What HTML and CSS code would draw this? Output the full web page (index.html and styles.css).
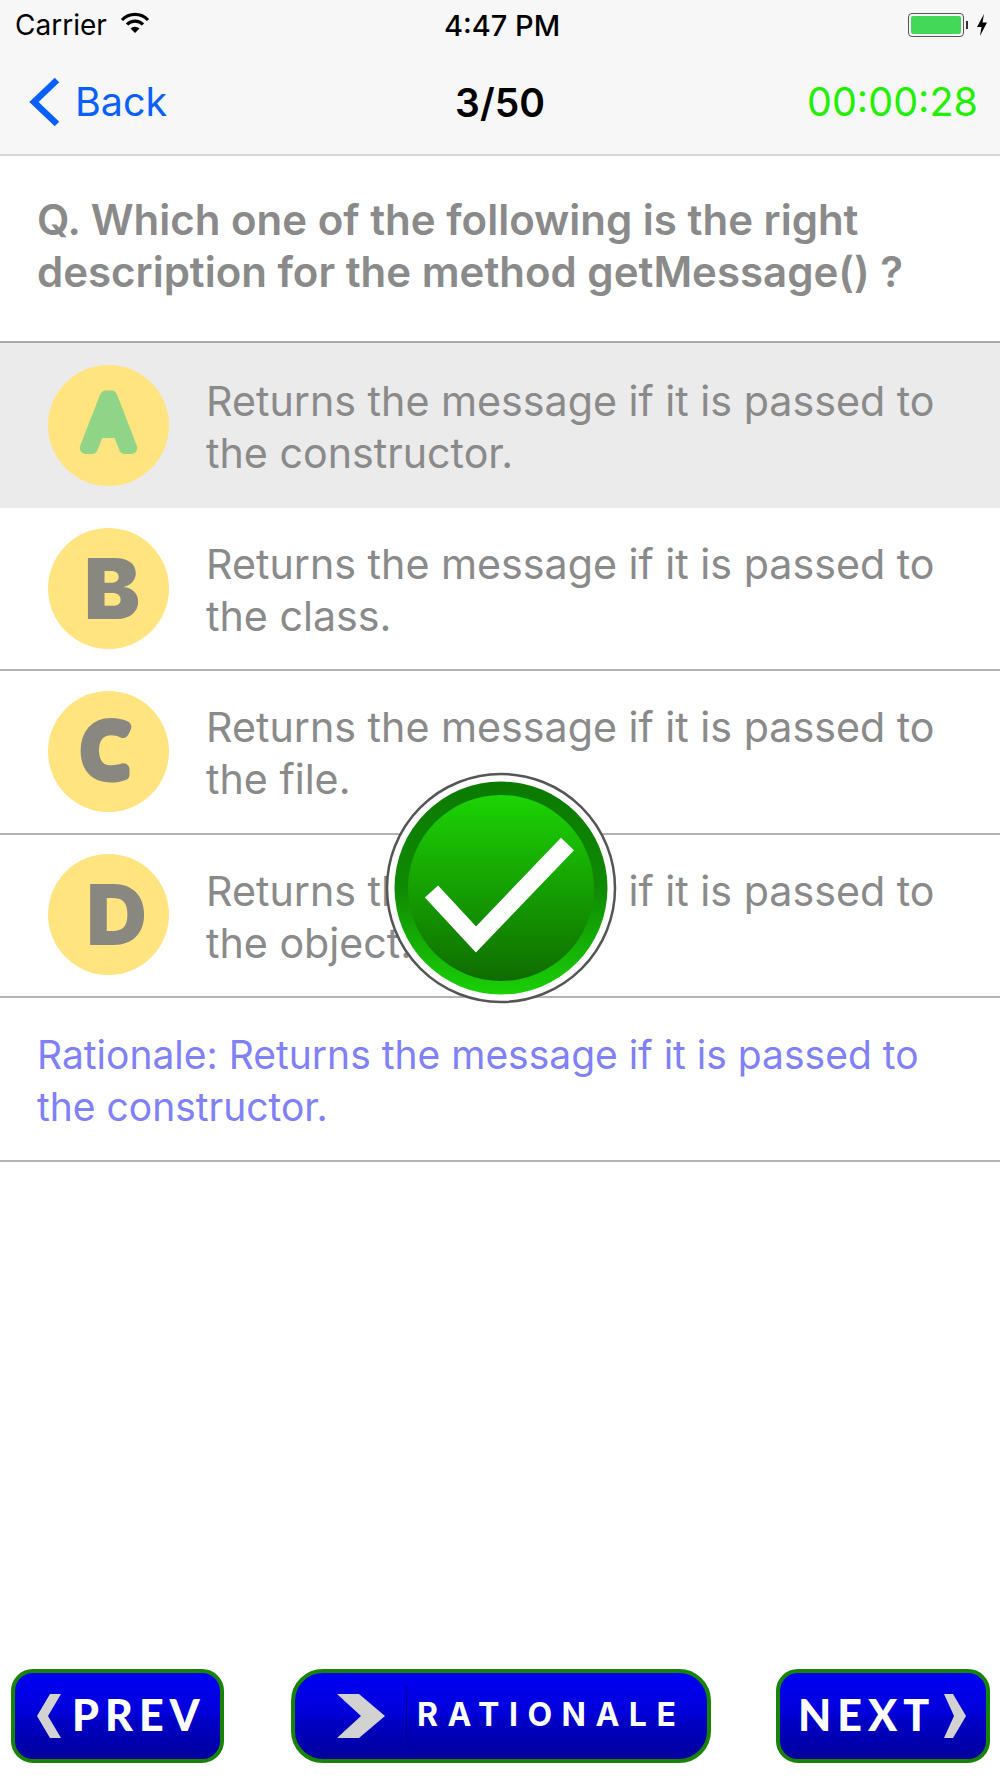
FILE: index.html
```html
<!DOCTYPE html>
<html lang="en">
<head>
    <meta charset="UTF-8">
    <meta name="viewport" content="width=device-width, initial-scale=1.0">
    <title>Quiz</title>
    <link rel="stylesheet" href="styles.css">
</head>
<body>
    <div class="screen">
        <header class="top">
            <div class="status">
                <div class="status-left">
                    <span>Carrier</span>
                    <svg class="wifi" width="30" height="22" viewBox="0 0 30 22">
                        <path d="M2 8 A18 18 0 0 1 28 8" fill="none" stroke="#000" stroke-width="3.2"/>
                        <path d="M7 12.5 A11 11 0 0 1 23 12.5" fill="none" stroke="#000" stroke-width="3.2"/>
                        <path d="M15 21 L10.5 16.5 A6.5 6.5 0 0 1 19.5 16.5 Z" fill="#000"/>
                    </svg>
                </div>
                <div class="status-time">4:47 PM</div>
                <div class="status-right">
                    <div class="battery"><div class="battery-fill"></div></div>
                    <div class="battery-tip"></div>
                    <svg width="14" height="24" viewBox="0 0 14 24"><path d="M9 1 L2 14 H6.5 L5 23 L12 9.5 H7.5 Z" fill="#000"/></svg>
                </div>
            </div>
            <nav class="nav">
                <div class="back">
                    <svg width="32" height="50" viewBox="0 0 32 50"><path d="M29 3 L6 25 L29 47" fill="none" stroke="#0a60ff" stroke-width="6.5"/></svg>
                    <span>Back</span>
                </div>
                <div class="count">3/50</div>
                <div class="timer">00:00:28</div>
            </nav>
        </header>

        <section class="question">Q. Which one of the following is the right description for the method getMessage() ?</section>

        <div class="answers">
            <div class="answer selected">
                <svg class="badge" width="121" height="121" viewBox="0 0 121 121">
                    <circle cx="60.5" cy="60.5" r="60.5" fill="#ffe480"/>
                    <text class="badge-letter badge-right" x="60.5" y="83" text-anchor="middle">A</text>
                </svg>
                <p>Returns the message if it is passed to the constructor.</p>
            </div>
            <div class="answer">
                <div class="badge badge-plain badge-b">B</div>
                <p>Returns the message if it is passed to the class.</p>
            </div>
            <div class="answer">
                <svg class="badge" width="121" height="121" viewBox="0 0 121 121">
                    <circle cx="60.5" cy="60.5" r="60.5" fill="#ffe480"/>
                    <text class="badge-letter badge-wrong" x="57" y="85" text-anchor="middle">C</text>
                </svg>
                <p>Returns the message if it is passed to the file.</p>
            </div>
            <div class="answer">
                <div class="badge badge-plain badge-d">D</div>
                <p>Returns the message if it is passed to the object.</p>
            </div>
            <div class="rationale">Rationale: Returns the message if it is passed to the constructor.</div>

            <svg class="tick" width="232" height="232" viewBox="0 0 232 232">
                <defs>
                    <linearGradient id="outerGreen" x1="0" y1="0" x2="0" y2="1">
                        <stop offset="0" stop-color="#0b7a00"/>
                        <stop offset="0.5" stop-color="#0f8a04"/>
                        <stop offset="1" stop-color="#1ad006"/>
                    </linearGradient>
                    <linearGradient id="innerGreen" x1="0" y1="0" x2="0" y2="1">
                        <stop offset="0" stop-color="#1cd404"/>
                        <stop offset="1" stop-color="#0f6c00"/>
                    </linearGradient>
                </defs>
                <circle cx="116" cy="116" r="114" fill="#fff" stroke="#555" stroke-width="2.5"/>
                <circle cx="116" cy="116" r="106.5" fill="url(#outerGreen)"/>
                <circle cx="116" cy="116" r="93" fill="url(#innerGreen)"/>
                <path d="M46.5 119.5 L91 167.5 L182.5 72" fill="none" stroke="#fff" stroke-width="18"/>
            </svg>
        </div>

        <footer class="actions">
            <div class="btn btn-prev">
                <svg width="26" height="44" viewBox="0 0 26 44"><path d="M25 0 H14 L1 22 L14 44 H25 L12 22 Z" fill="#d2d2d2"/></svg>
                <span class="btn-label">PREV</span>
            </div>
            <div class="btn btn-rationale">
                <svg width="50" height="44" viewBox="0 0 50 44"><path d="M1 0 H23 L49 22 L23 44 H1 L25 22 Z" fill="#d2d2d2"/></svg>
                <span class="divider"></span>
                <span class="btn-label">RATIONALE</span>
            </div>
            <div class="btn btn-next">
                <span class="btn-label">NEXT</span>
                <svg width="24" height="44" viewBox="0 0 24 44"><path d="M1 0 H10 L23 22 L10 44 H1 L11 22 Z" fill="#d2d2d2"/></svg>
            </div>
        </footer>
    </div>
</body>
</html>
```

FILE: styles.css
```css
* {
    box-sizing: border-box;
}
body {
    margin: 0;
    font-family: Inter, "Liberation Sans", sans-serif;
    background-color: #ffffff;
}
.screen {
    position: relative;
    height: 1778px;
    display: flex;
    flex-direction: column;
    overflow: hidden;
}
.top {
    height: 156px;
    background-color: #f7f7f7;
    border-bottom: 2px solid #d6d6d6;
}
.status {
    height: 50px;
    padding: 0 11px 0 15px;
    display: grid;
    grid-template-columns: 1fr auto 1fr;
    align-items: center;
    font-size: 28px;
    color: #000000;
}
.status-left {
    display: flex;
    align-items: center;
    gap: 13px;
}
.wifi {
    margin-top: -4px;
}
.status-time {
    font-size: 29px;
    font-weight: 500;
}
.status-right {
    display: flex;
    align-items: center;
    justify-content: flex-end;
}
.battery {
    width: 56px;
    height: 24px;
    padding: 2px;
    border: 1px solid #555555;
    border-radius: 4px;
}
.battery-fill {
    height: 100%;
    background-color: #44d858;
    border-radius: 2px;
}
.battery-tip {
    width: 2px;
    height: 8px;
    margin: 0 7px 0 2px;
    background-color: #333333;
}
.nav {
    height: 104px;
    padding: 0 22px;
    display: grid;
    grid-template-columns: 1fr auto 1fr;
    align-items: center;
}
.back {
    display: flex;
    align-items: center;
    gap: 15px;
    margin-left: 6px;
    font-size: 39.5px;
    color: #0a60ff;
}
.count {
    font-size: 39px;
    font-weight: 600;
    color: #000000;
}
.timer {
    text-align: right;
    font-size: 39.5px;
    color: #22f000;
}
.question {
    height: 187px;
    padding: 38px 20px 0 37px;
    font-size: 42px;
    line-height: 52px;
    font-weight: 600;
    color: #8a8a8a;
    border-bottom: 2px solid #a8a8a8;
}
.answers {
    position: relative;
}
.answer {
    height: 163.3px;
    padding: 0 48px;
    display: flex;
    align-items: center;
    gap: 37px;
    border-bottom: 2px solid #b4b4b4;
}
.answer.selected {
    height: 165px;
    background-color: #ebebeb;
    border-bottom: none;
}
.answer p {
    margin: 3px 0 0;
    font-size: 41.2px;
    line-height: 52px;
    color: #8a8a8a;
}
.rationale {
    height: 164px;
    padding: 31px 40px 0 37px;
    font-size: 39px;
    line-height: 52px;
    color: #8080f8;
    border-bottom: 2px solid #b4b4b4;
}
.badge {
    width: 121px;
    height: 121px;
    margin-top: -1px;
    flex: none;
}
.badge-plain {
    border-radius: 50%;
    background-color: #ffe480;
    display: flex;
    align-items: center;
    justify-content: center;
    font-size: 84px;
    font-weight: 900;
    color: #888780;
}
.badge-b {
    padding-left: 7px;
}
.badge-d {
    padding-left: 16px;
}
.badge-letter {
    font-family: "Open Sans", sans-serif;
    font-size: 72px;
    font-weight: 400;
    stroke-width: 12px;
    stroke-linejoin: round;
}
.badge-right {
    fill: #90d488;
    stroke: #90d488;
}
.badge-wrong {
    fill: #888780;
    stroke: #888780;
}
.tick {
    position: absolute;
    left: 385px;
    top: 429px;
}
.actions {
    margin-top: auto;
    padding: 0 10px 15px 11px;
    display: flex;
    justify-content: space-between;
}
.btn {
    height: 94px;
    display: flex;
    align-items: center;
    border: 4px solid #178307;
    background: linear-gradient(#0000f4, #0000d8 50%, #0000cc 50%, #00009c);
    color: #ffffff;
    font-family: Lato, sans-serif;
    font-weight: 900;
}
.btn-label {
    margin-bottom: 4px;
}
.btn-prev {
    width: 213px;
    padding-left: 21px;
    gap: 10px;
    border-radius: 22px;
    font-size: 43px;
    letter-spacing: 6px;
}
.btn-rationale {
    width: 420px;
    margin-left: 2px;
    padding-left: 41px;
    border-radius: 32px;
    font-family: Inter, sans-serif;
    font-size: 32px;
    font-weight: 700;
    letter-spacing: 9.5px;
}
.divider {
    width: 1px;
    height: 60px;
    margin: 0 10px 0 20px;
    background-color: #000080;
}
.btn-next {
    width: 214px;
    padding-left: 18px;
    gap: 8px;
    border-radius: 22px;
    font-size: 43px;
    letter-spacing: 6px;
}
```
